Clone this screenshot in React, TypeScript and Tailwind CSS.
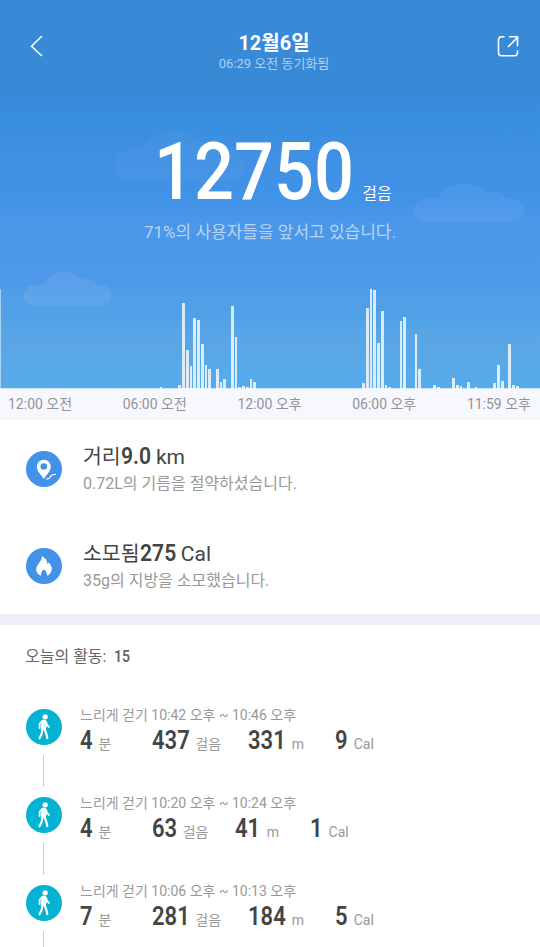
import { ReactNode } from "react";

// [x, width, height]
const bars: [number, number, number][] = [
  [0, 1, 99], [160, 2, 1], [178, 3, 3], [182, 3, 85], [186, 3, 38], [190, 2, 22],
  [193, 3, 70], [197, 3, 68], [201, 3, 44], [205, 2, 23], [208, 3, 19], [216, 3, 19],
  [220, 2, 6], [223, 3, 9], [231, 3, 82], [235, 2, 51], [238, 3, 1], [242, 3, 2],
  [246, 3, 1], [250, 2, 9], [253, 3, 6], [362, 3, 5], [366, 3, 80], [370, 2, 99],
  [373, 3, 98], [377, 3, 45], [381, 3, 77], [385, 2, 3], [388, 3, 1], [400, 2, 67],
  [403, 3, 71], [415, 2, 54], [418, 3, 19], [433, 3, 3], [437, 3, 1], [452, 3, 10],
  [456, 3, 3], [460, 2, 2], [467, 3, 6], [475, 2, 1], [493, 3, 5], [497, 3, 23],
  [501, 3, 7], [508, 3, 44], [512, 3, 3], [516, 3, 2],
];

const activities = [
  { time: "10:42 오후 ~ 10:46 오후", min: "4", steps: "437", dist: "331", cal: "9" },
  { time: "10:20 오후 ~ 10:24 오후", min: "4", steps: "63", dist: "41", cal: "1" },
  { time: "10:06 오후 ~ 10:13 오후", min: "7", steps: "281", dist: "184", cal: "5" },
];

// Condensed numerals. The negative margin takes back the width lost by scaling.
const Digits = ({ children, className = "" }: { children: string; className?: string }) => {
  const dots = children.split(".").length - 1;
  const em = (children.length - dots) * 0.565 + dots * 0.28;
  return (
    <span
      className={`inline-block origin-left scale-x-[0.88] ${className}`}
      style={{ marginRight: `${-em * 0.12}em` }}
    >
      {children}
    </span>
  );
};

const Cloud = ({ className }: { className: string }) => (
  <svg className={`absolute fill-white ${className}`} viewBox="0 0 90 34" preserveAspectRatio="none">
    <path d="M11 34a10.500 10.500 0 0 1 0-21h10C23 5 32 0 41 0c8 0 15 3 19 8 6-3 12-1 15 5h4a10.500 10.500 0 0 1 0 21z" />
  </svg>
);

const PinIcon = () => (
  <svg className="h-9 w-9 shrink-0" viewBox="0 0 36 36">
    <circle cx="18" cy="18" r="18" fill="#4192e8" />
    <path d="M17.800 28c-3-4.500-7-8-7-12.200a7 7 0 0 1 14 0c0 4.200-4 7.700-7 12.200z" fill="#fff" />
    <circle cx="17.800" cy="15.500" r="3.300" fill="#4192e8" />
    <path d="M20.500 28c3 .3 3.200-1.200 4.500-3.200 1-1.500 2.500-1.600 5-1.500" fill="none" stroke="#fff" strokeWidth="1.300" />
  </svg>
);

const FlameIcon = () => (
  <svg className="h-9 w-9 shrink-0" viewBox="0 0 36 36">
    <circle cx="18" cy="18" r="18" fill="#4192e8" />
    <path
      d="M15.800 8c3.500 1.500 5.500 4.500 5.600 8.200.6-.6.8-1.200.8-2 2.200 1.800 3.600 4 3.600 6.600 0 3.300-2 6-4.800 7 .3-2.700-.8-4.700-3.200-6.600-2 1.700-3.100 3.900-2.700 6.600-3-.9-4.900-3.500-4.900-6.600 0-5 5.800-7 5.600-13.200z"
      fill="#fff"
    />
  </svg>
);

const WalkIcon = () => (
  <svg className="h-9 w-9 shrink-0" viewBox="0 0 36 36">
    <circle cx="18" cy="18" r="18" fill="#03b3d1" />
    <circle cx="19.200" cy="7.800" r="2.600" fill="#fff" />
    <path d="M16 11.300h3.400l1 5.200-.9 3.500h-4.200z" fill="#fff" stroke="#fff" strokeLinejoin="round" />
    <path
      d="M16.200 11.800l-2.500 3-.1 4.300M20 12.500l1 3 2 2.800"
      fill="none"
      stroke="#fff"
      strokeWidth="1.700"
      strokeLinecap="round"
      strokeLinejoin="round"
    />
    <path
      d="M16.300 20l-.6 4.800-2.200 4.500M18.500 20l1.600 4 1.300 5.300"
      fill="none"
      stroke="#fff"
      strokeWidth="2.100"
      strokeLinecap="round"
      strokeLinejoin="round"
    />
  </svg>
);

interface SummaryProps {
  icon: ReactNode;
  label: string;
  value: string;
  unit: string;
  note: string;
}

const Summary = ({ icon, label, value, unit, note }: SummaryProps) => (
  <div className="flex h-[97px] items-start pl-[26px] pt-[22px]">
    <div className="pt-[9px]">{icon}</div>
    <div className="ml-[21px] whitespace-nowrap">
      <div className="flex h-7 items-baseline text-[20.500px] leading-7 text-[#444]">
        <span>{label}</span>
        <Digits className="text-[24px] font-semibold">{value}</Digits>
        <span className="ml-[5px] text-[21px]">{unit}</span>
      </div>
      <p className="h-7 text-[16px] leading-7 text-[#999]">{note}</p>
    </div>
  </div>
);

const Stat = ({ value, unit, className = "" }: { value: string; unit: string; className?: string }) => (
  <span className={`flex items-baseline ${className}`}>
    <Digits className="text-[25px] font-semibold text-[#444]">{value}</Digits>
    <span className="ml-[6px] text-[14px] text-[#999]">{unit}</span>
  </span>
);

export default function App() {
  return (
    <div className="h-[947px] w-[540px] overflow-hidden bg-white font-[Roboto,'Noto_Sans_CJK_KR',sans-serif]">
      <section className="relative flex h-[389px] flex-col bg-[linear-gradient(#3889d6_0px,#3889d6_96px,#398ddf_110px,#3b8fe0_135px,#4090e5_155px,#4193e8_200px,#4a97e8_220px,#4e98e8_280px,#509fe8_298px,#50a1e7_318px,#5aa5e6_335px,#58a9e8_365px,#57abeb_389px)] text-white">
        <Cloud className="left-[114px] top-[130px] h-[52px] w-[132px] opacity-[0.03]" />
        <Cloud className="left-[413px] top-[184px] h-[38px] w-[112px] opacity-[0.05]" />
        <Cloud className="left-[23px] top-[272px] h-[34px] w-[89px] opacity-[0.07]" />

        <header className="flex h-[92px] items-center justify-between pl-[28px] pr-[20px]">
          <svg className="h-6 w-6" viewBox="0 0 24 24" fill="none" stroke="currentColor" strokeWidth="1.500">
            <path d="M14 2L3.500 12.200 14 22" />
          </svg>
          <div className="pt-3 text-center">
            <h1 className="h-6 text-[20px] font-bold leading-6">12월6일</h1>
            <p className="h-[18px] text-[13px] leading-[18px] text-white/60">06:29 오전 동기화됨</p>
          </div>
          <svg className="h-6 w-6" viewBox="0 0 24 24" fill="none" stroke="currentColor" strokeWidth="1.600">
            <path d="M8.500 2.800H5.500a3 3 0 0 0-3 3v13a3 3 0 0 0 3 3h13a3 3 0 0 0 3-3v-2.500M12 13l9-9M13 2.800h8.500v9.500" />
          </svg>
        </header>

        <div className="flex h-[120px] items-baseline pl-[154px] pt-[32px] leading-[96px]">
          <Digits className="text-[80px] font-medium">12750</Digits>
          <span className="ml-[8px] text-[16px]">걸음</span>
        </div>
        <p className="h-10 text-center text-[17px] leading-10 text-white/60">
          71%의 사용자들을 앞서고 있습니다.
        </p>
        <svg className="mt-auto h-[100px] w-[540px]" viewBox="0 0 540 100" shapeRendering="crispEdges">
          {bars.map(([x, w, h]) => (
            <rect key={x} x={x} y={99 - h} width={w} height={h + 1} fill="#fff" fillOpacity={x === 0 ? 0.5 : 0.78} />
          ))}
          <rect x="0" y="99" width="540" height="1" fill="#fff" fillOpacity="0.7" />
        </svg>
      </section>

      <div className="flex h-[31px] justify-between whitespace-nowrap bg-[#f7f7ff] pl-[8px] pr-[9px] text-[14px] leading-[31px] text-[#949494]">
        <span>12:00 오전</span>
        <span>06:00 오전</span>
        <span>12:00 오후</span>
        <span>06:00 오후</span>
        <span>11:59 오후</span>
      </div>

      <section className="h-[194px]">
        <Summary icon={<PinIcon />} label="거리" value="9.0" unit="km" note="0.72L의 기름을 절약하셨습니다." />
        <Summary icon={<FlameIcon />} label="소모됨" value="275" unit="Cal" note="35g의 지방을 소모했습니다." />
      </section>
      <div className="h-[11px] bg-[#eeeef8]" />

      <section>
        <h2 className="flex h-[64px] items-baseline pl-[25px] text-[16px] leading-[64px] text-[#666]">
          오늘의 활동: <Digits className="ml-[8px] font-semibold">15</Digits>
        </h2>
        {activities.map((a) => (
          <div key={a.time} className="flex h-[88px] pl-[26px] pt-[14px]">
            <div className="flex h-[88px] flex-col items-center pt-[6px]">
              <WalkIcon />
              <div className="-ml-px mt-[10px] h-[32px] w-px bg-[#ccc]" />
            </div>
            <div className="ml-[18px] whitespace-nowrap">
              <p className="h-6 text-[14px] leading-6 text-[#999]">느리게 걷기 {a.time}</p>
              <div className="flex h-7 items-baseline leading-7">
                <Stat value={a.min} unit="분" />
                <Stat value={a.steps} unit="걸음" className="ml-[40px]" />
                <Stat value={a.dist} unit="m" className="ml-[27px]" />
                <Stat value={a.cal} unit="Cal" className="ml-[31px]" />
              </div>
            </div>
          </div>
        ))}
      </section>
    </div>
  );
}
